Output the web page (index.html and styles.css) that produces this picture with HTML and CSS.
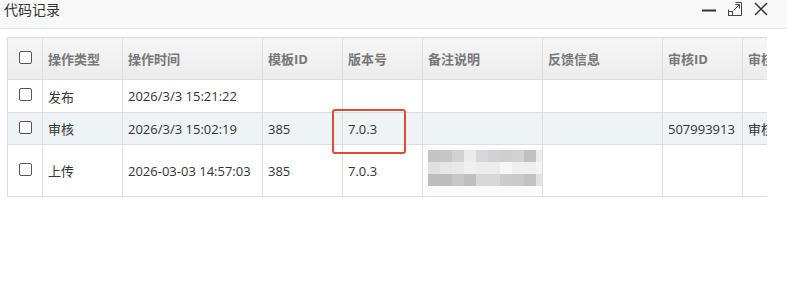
FILE: index.html
```html
<!DOCTYPE html>
<html lang="zh">
<head>
<meta charset="utf-8">
<link rel="stylesheet" href="styles.css">
</head>
<body>
<div class="dialog">
  <div class="titlebar">
    <span class="title">代码记录</span>
    <div class="tools">
      <svg class="ico" width="14" height="14" viewBox="0 0 14 14"><path d="M0 8.5H14" stroke="#333" stroke-width="2"/></svg>
      <svg class="ico" width="14" height="14" viewBox="0 0 14 14" fill="none" stroke="#444" stroke-width="1">
        <path d="M7.5 0.5H13.5V13.5H0.5V7.5"/>
        <rect x="0.5" y="9.5" width="4" height="4"/>
        <path d="M5.5 8.5L11.5 2.5M7.5 2.5H11.5V6.5"/>
      </svg>
      <svg class="ico" width="14" height="14" viewBox="0 0 14 14"><path d="M1 1L13 13M13 1L1 13" stroke="#333" stroke-width="1.5"/></svg>
    </div>
  </div>
  <div class="content">
    <div class="grid-wrap">
      <table class="grid">
        <colgroup>
          <col class="c-chk"><col class="c-type"><col class="c-time"><col class="c-tpl"><col class="c-ver"><col class="c-note"><col class="c-fb"><col class="c-aid"><col class="c-st">
        </colgroup>
        <thead>
          <tr>
            <th class="chk"><span class="box"></span></th>
            <th>操作类型</th><th>操作时间</th><th>模板ID</th><th>版本号</th><th>备注说明</th><th>反馈信息</th><th>审核ID</th><th>审核状态</th>
          </tr>
        </thead>
        <tbody>
          <tr class="r1">
            <td class="chk"><span class="box"></span></td>
            <td>发布</td><td>2026/3/3 15:21:22</td><td></td><td></td><td></td><td></td><td></td><td></td>
          </tr>
          <tr class="r2 alt">
            <td class="chk"><span class="box"></span></td>
            <td>审核</td><td>2026/3/3 15:02:19</td><td>385</td><td>7.0.3</td><td></td><td></td><td>507993913</td><td>审核中</td>
          </tr>
          <tr class="r3">
            <td class="chk"><span class="box"></span></td>
            <td>上传</td><td>2026-03-03 14:57:03</td><td>385</td><td>7.0.3</td>
            <td class="imgcell">
              <div class="mosaic">
                <div class="tiles">
                  <i style="background:#c4c4c4"></i><i style="background:#c6c6c6"></i><i style="background:#d2d2d2"></i><i style="background:#ebebeb"></i><i style="background:#d6d6dc"></i><i style="background:#d2d2d2"></i><i style="background:#cfcfcf"></i><i style="background:#d2d2d2"></i><i style="background:#c1c0be"></i><i style="background:#ececec"></i>
                  <i style="background:#e0e0e0"></i><i style="background:#e6e6e6"></i><i style="background:#e8e8e8"></i><i style="background:#f0f0f0"></i><i style="background:#ececec"></i><i style="background:#ececec"></i><i style="background:#f6f6f6"></i><i style="background:#efefef"></i><i style="background:#efefef"></i><i style="background:#f3f3f3"></i>
                  <i style="background:#bdbdbd"></i><i style="background:#c0bcbc"></i><i style="background:#c7c7c7"></i><i style="background:#bfbfbf"></i><i style="background:#d8d8d8"></i><i style="background:#d8d8d8"></i><i style="background:#cccccc"></i><i style="background:#c9c9cc"></i><i style="background:#c6c2c0"></i><i style="background:#e0e4e8"></i>
                </div>
              </div>
            </td>
            <td></td><td></td><td></td>
          </tr>
        </tbody>
      </table>
    </div>
    <div class="mark"></div>
  </div>
</div>
</body>
</html>
```

FILE: styles.css
```css
* { box-sizing: border-box; }
html, body { margin: 0; padding: 0; background: #fff; }
body {
  font-family: "Open Sans", "Noto Sans CJK SC", sans-serif;
  font-size: 13px;
  color: #333;
}
.dialog { width: 787px; height: 293px; overflow: hidden; }
.titlebar {
  height: 29px;
  background: #f8f8f8;
  border-bottom: 1px solid #e8e8e8;
  display: flex;
  align-items: center;
  justify-content: space-between;
  padding: 0 19px 0 4px;
}
.title {
  font-size: 14px;
  color: #333;
  line-height: 16px;
  margin-top: -8px;
}
.tools { display: flex; gap: 12px; align-items: center; margin-top: -10px; }
.ico { display: block; }
.content { position: relative; padding: 8px 0 0 7px; }
.grid-wrap { width: 760px; overflow: hidden; }
.grid {
  border-collapse: collapse;
  table-layout: fixed;
  width: 815px;
}
.c-chk { width: 35px; }
.c-type { width: 80px; }
.c-time { width: 140px; }
.c-tpl { width: 80px; }
.c-ver { width: 80px; }
.c-note { width: 120px; }
.c-fb { width: 120px; }
.c-aid { width: 80px; }
.c-st { width: 80px; }
.grid th, .grid td {
  border: 1px solid #dedede;
  padding: 0 5px;
  text-align: left;
  vertical-align: middle;
  white-space: nowrap;
  overflow: hidden;
}
.grid thead th {
  height: 42px;
  background: linear-gradient(#f6f6f6, #ececec);
  color: #777;
  font-weight: bold;
  font-size: 13px;
}
.grid tr.r1 td { height: 33px; }
.grid tr.r2 td { height: 32px; }
.grid tr.r3 td { height: 52px; }
.grid tr.alt td { background: #eef3f5; }
.grid th.chk, .grid td.chk { padding: 0 0 3px 11px; }
.box {
  display: block;
  width: 13px;
  height: 13px;
  border: 1px solid #555;
  border-radius: 2px;
  background: #fff;
}
.grid td.imgcell { padding: 2px 0 2px 2px; vertical-align: top; }
.mosaic {
  width: 121px;
  height: 46px;
  background: #fafafa;
  padding: 3px 0 0 3px;
}
.tiles {
  display: grid;
  grid-template-columns: repeat(9, 12px) 10px;
  grid-template-rows: repeat(3, 12px);
}
.tiles i { display: block; }
.mark {
  position: absolute;
  left: 332px;
  top: 80px;
  width: 74px;
  height: 45px;
  border: 2px solid #e8453c;
  border-radius: 3px;
}
```
